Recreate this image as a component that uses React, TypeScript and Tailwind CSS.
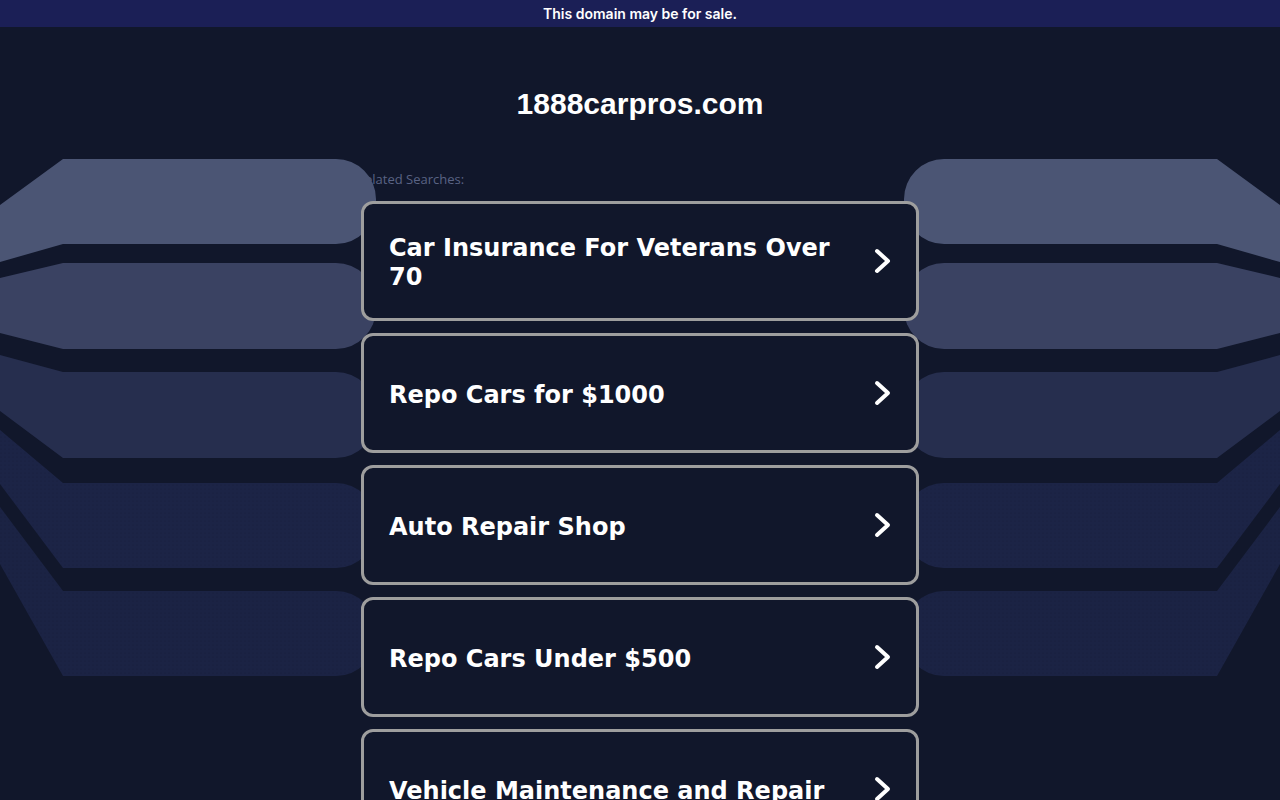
import React from 'react';

const searches = [
  'Car Insurance For Veterans Over 70',
  'Repo Cars for $1000',
  'Auto Repair Shop',
  'Repo Cars Under $500',
  'Vehicle Maintenance and Repair',
];

// left-edge y, top y, bottom y, left-edge bottom y, colour
const bands = [
  { a: 205, t: 159, b: 244, c: 262, fill: '#4b5574' },
  { a: 278, t: 263, b: 349, c: 333, fill: '#3a4262' },
  { a: 355, t: 372, b: 458, c: 411, fill: '#262e4e' },
  { a: 430, t: 483, b: 568, c: 484, fill: 'url(#dots4)' },
  { a: 507, t: 591, b: 676, c: 564, fill: 'url(#dots5)' },
];

const bandPath = (a: number, t: number, b: number, c: number) =>
  `M0,${a} L63,${t} H336 A40,40 0 0 1 376,${t + 40} V${b - 40} A40,40 0 0 1 336,${b} H63 L0,${c} Z`;

const Backdrop = () => (
  <svg
    className="absolute top-0 left-0 z-10 pointer-events-none"
    width="1280"
    height="800"
    viewBox="0 0 1280 800"
  >
    <defs>
      <pattern id="dots4" width="4" height="4" patternUnits="userSpaceOnUse">
        <rect width="4" height="4" fill="#1c2446" />
        <circle cx="1" cy="1" r="0.6" fill="#161d3a" />
      </pattern>
      <pattern id="dots5" width="4" height="4" patternUnits="userSpaceOnUse">
        <rect width="4" height="4" fill="#1b2344" />
        <circle cx="1" cy="1" r="0.6" fill="#151b37" />
      </pattern>
    </defs>
    {bands.map((band, i) => (
      <path key={`l${i}`} d={bandPath(band.a, band.t, band.b, band.c)} fill={band.fill} />
    ))}
    <g transform="translate(1280,0) scale(-1,1)">
      {bands.map((band, i) => (
        <path key={`r${i}`} d={bandPath(band.a, band.t, band.b, band.c)} fill={band.fill} />
      ))}
    </g>
  </svg>
);

const Chevron = () => (
  <svg width="22" height="28" viewBox="0 0 22 28" className="shrink-0">
    <path
      d="M6 4 L17 14 L6 24"
      fill="none"
      stroke="#ffffff"
      strokeWidth="4"
      strokeLinecap="round"
      strokeLinejoin="round"
    />
  </svg>
);

const SearchCard = ({ label }: { label: string }) => (
  <a
    href="#"
    className="flex h-[120px] items-center justify-between rounded-[12px] border-[3px] border-[#9e9e9e] bg-[#11172b] pl-[25px] pr-[23px]"
  >
    <span
      className="max-w-[470px] pt-[4px] text-[24px] leading-[29px] font-bold text-white"
      style={{ fontFamily: '"DejaVu Sans", Verdana, sans-serif' }}
    >
      {label}
    </span>
    <Chevron />
  </a>
);

export default function App() {
  return (
    <div className="relative min-h-[800px] w-full overflow-hidden bg-[#11172b]">
      <div
        className="relative z-20 flex h-[27px] items-center justify-center bg-[#1b1f56] text-[14px] font-semibold text-white"
        style={{ fontFamily: 'Inter, "Open Sans", sans-serif' }}
      >
        This domain may be for sale.
      </div>

      <Backdrop />

      <h1
        className="mt-[59px] text-center text-[30px] leading-[36px] font-bold text-white"
        style={{ fontFamily: '"Liberation Sans", Arial, sans-serif' }}
      >
        1888carpros.com
      </h1>

      <div className="mx-auto mt-[49px] w-[558px]">
        <p
          className="-ml-[4px] text-[13px] leading-[16px] text-[#5a6384]"
          style={{ fontFamily: '"Open Sans", sans-serif' }}
        >
          Related Searches:
        </p>
        <div className="relative z-20 mt-[14px] flex flex-col gap-[12px]">
          {searches.map((s) => (
            <SearchCard key={s} label={s} />
          ))}
        </div>
      </div>
    </div>
  );
}
